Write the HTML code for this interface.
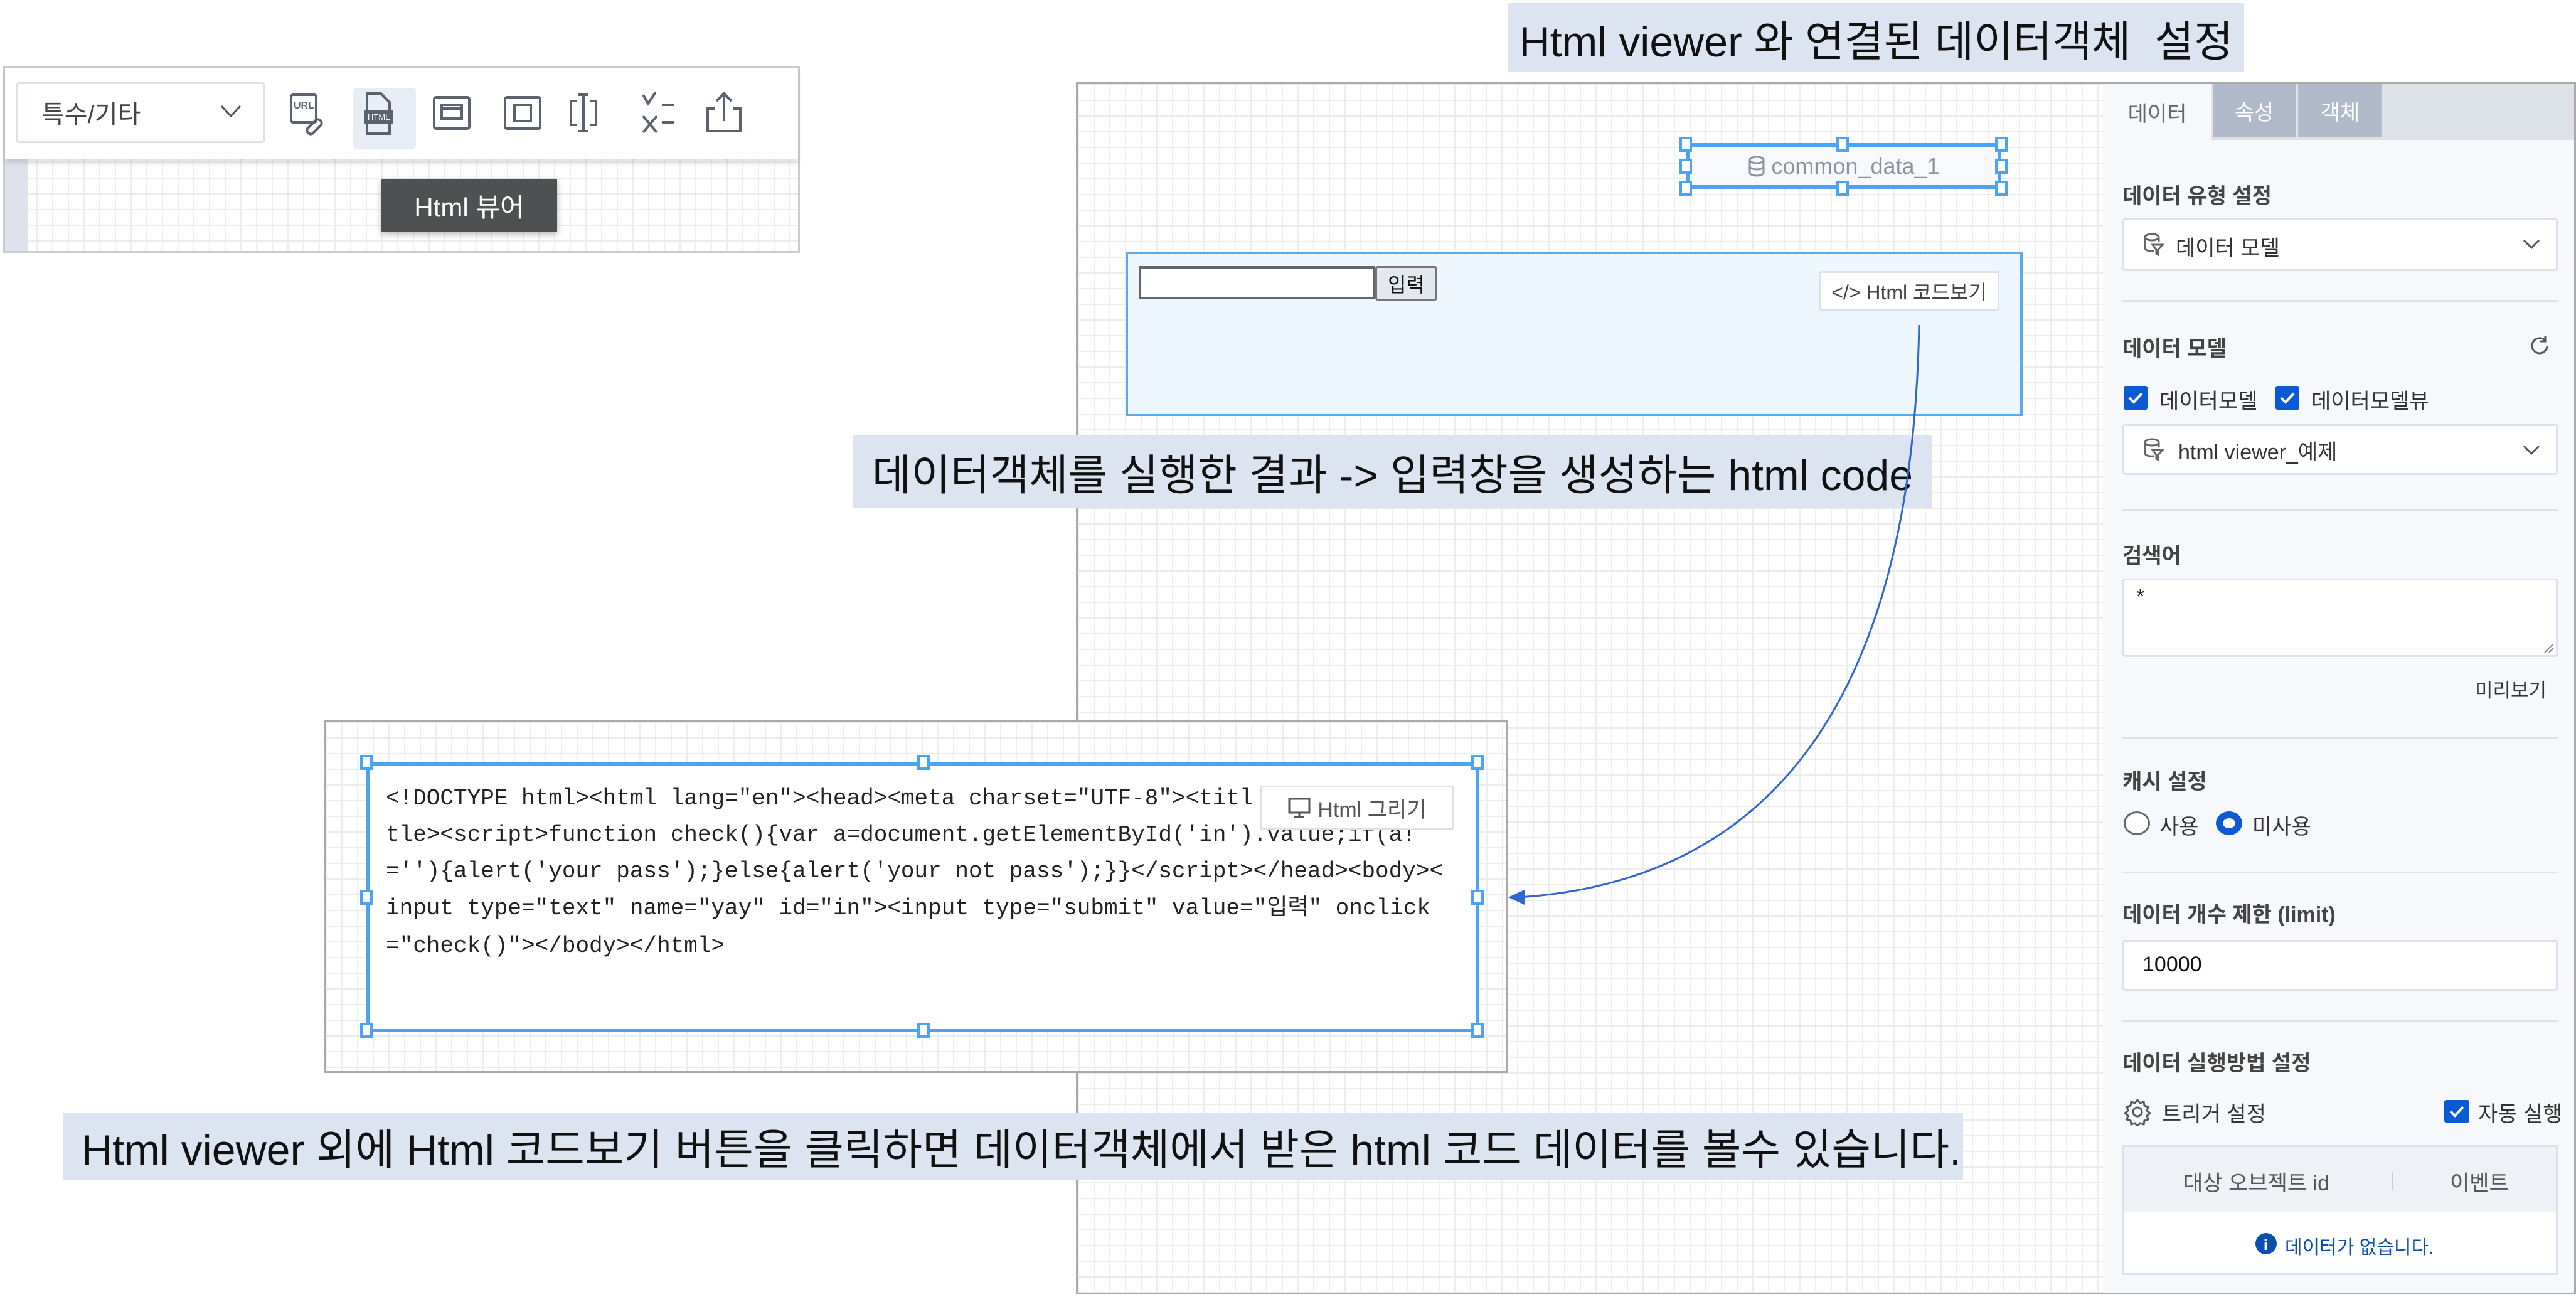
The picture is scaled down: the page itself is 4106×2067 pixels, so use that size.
<!DOCTYPE html>
<html><head><meta charset="utf-8"><style>
*{margin:0;padding:0;box-sizing:border-box}
body{width:4106px;height:2067px;background:#fff;position:relative;overflow:hidden;font-family:"Liberation Sans","Noto Sans CJK KR",sans-serif;color:#333}
.a{position:absolute}
.grid{background-color:#fff;background-image:linear-gradient(#ececec 2px,transparent 2px),linear-gradient(90deg,#eeeeee 2px,transparent 2px);background-size:25px 25px}
.lbl{position:absolute;background:#dce4f2;color:#111;font-size:68px;white-space:nowrap;display:flex;align-items:center;justify-content:center}
.h{width:20px;height:24px;background:#fff;border:4px solid #4aa3f5;position:absolute}
.ps{position:absolute;left:3383px;font-size:34px;color:#333;white-space:nowrap}
.b{font-weight:bold;color:#444}
.sel{position:absolute;left:3383px;width:694px;background:#fff;border:3px solid #dde2ea;border-radius:4px}
.div{position:absolute;left:3383px;width:694px;height:3px;background:#dde3eb}
.cb{position:absolute;width:38px;height:38px;background:#0a5bd3;border-radius:3px}
.code{position:absolute;left:615px;font-family:"Liberation Mono","Noto Sans CJK KR",monospace;font-size:36px;line-height:42px;color:#222;white-space:pre}
</style></head><body>

<!-- toolbar panel -->
<div class="a grid" style="left:5px;top:105px;width:1270px;height:298px;border:3px solid #ccc"></div>
<div class="a" style="left:8px;top:254px;width:36px;height:146px;background:#dde3ec"></div>
<div class="a" style="left:8px;top:108px;width:1264px;height:146px;background:#fff;box-shadow:0 6px 8px rgba(0,0,0,.12)"></div>
<div class="a" style="left:26px;top:131px;width:396px;height:97px;border:3px solid #dde2ea;border-radius:4px;background:#fff"></div>
<div class="a" style="left:66px;top:150px;font-size:40px;color:#444">특수/기타</div>
<svg class="a" style="left:350px;top:165px" width="36" height="24"><path d="M3 4 L18 20 L33 4" fill="none" stroke="#555" stroke-width="3"/></svg>
<div class="a" style="left:563px;top:140px;width:100px;height:98px;background:#e9eef6;border-radius:6px"></div>
<svg class="a" style="left:460px;top:145px" width="780" height="80" fill="none" stroke="#5a6270" stroke-width="4">
  <rect x="4" y="6" width="40" height="44" rx="3"/><text x="8" y="28" font-size="16" fill="#5a6270" stroke="none" font-weight="bold" font-family="Liberation Sans">URL</text>
  <path d="M30 60 l14 -14 a6 6 0 0 1 8 8 l-14 14 a6 6 0 0 1 -8 -8z"/>
  <path d="M125 4 h22 l14 14 v50 h-36z"/><rect x="122" y="32" width="42" height="18" fill="#5a6270"/><text x="126" y="46" font-size="13" fill="#fff" stroke="none" font-family="Liberation Sans">HTML</text>
  <rect x="232" y="10" width="56" height="50" rx="3"/><rect x="244" y="22" width="32" height="22"/><path d="M244 28 h32"/>
  <rect x="345" y="10" width="56" height="50" rx="3"/><rect x="360" y="22" width="26" height="26"/>
  <path d="M460 16 h-10 v38 h10 M480 16 h10 v38 h-10 M470 4 v62 M462 6 h16 M462 64 h16"/>
  <path d="M565 6 l8 14 l12 -18 M565 40 l22 26 M587 40 l-22 26 M595 22 h20 M595 50 h20"/>
  <path d="M680 28 h-12 v36 h52 v-36 h-12 M694 48 v-44 M682 16 l12 -12 l12 12"/>
</svg>
<div class="a" style="left:608px;top:285px;width:280px;height:84px;background:#4f5052;color:#fff;font-size:42px;display:flex;align-items:center;justify-content:center;box-shadow:0 4px 10px rgba(0,0,0,.3)">Html 뷰어</div>

<!-- title label -->
<div class="lbl" style="left:2404px;top:5px;width:1173px;height:110px">Html viewer 와 연결된 데이터객체&nbsp; 설정</div>

<!-- main canvas -->
<div class="a grid" style="left:1715px;top:131px;width:2391px;height:1932px;border:3px solid #aaa"></div>

<div class="a" style="left:2687px;top:228px;width:503px;height:73px;border:6px solid #4aa3f5;background:#f7f9fc;display:flex;align-items:center;justify-content:center;color:#8a929c;font-size:36px">
<svg width="30" height="34" style="margin-right:8px"><g fill="none" stroke="#8a929c" stroke-width="3"><ellipse cx="15" cy="7" rx="11" ry="5"/><path d="M4 7 v20 a11 5 0 0 0 22 0 v-20 M4 17 a11 5 0 0 0 22 0"/></g></svg>common_data_1</div>
<div class="h" style="left:2677px;top:218px"></div><div class="h" style="left:2927px;top:218px"></div><div class="h" style="left:3180px;top:218px"></div>
<div class="h" style="left:2677px;top:253px"></div><div class="h" style="left:3180px;top:253px"></div>
<div class="h" style="left:2677px;top:288px"></div><div class="h" style="left:2927px;top:288px"></div><div class="h" style="left:3180px;top:288px"></div>

<div class="a" style="left:1794px;top:401px;width:1430px;height:262px;background:#eef6fe;border:4px solid #5aa9f5"></div>
<div class="a" style="left:1815px;top:424px;width:377px;height:53px;border:4px solid #666;background:#fff"></div>
<div class="a" style="left:2192px;top:424px;width:99px;height:55px;border:3px solid #777;border-radius:4px;background:#e4e9f0;font-size:32px;color:#111;display:flex;align-items:center;justify-content:center">입력</div>
<div class="a" style="left:2899px;top:432px;width:288px;height:63px;background:#fff;border:3px solid #dde2ea;border-radius:3px;font-size:32px;color:#444;display:flex;align-items:center;justify-content:center">&lt;/&gt;&nbsp;Html 코드보기</div>

<div class="lbl" style="left:1359px;top:694px;width:1721px;height:115px">데이터객체를 실행한 결과 -&gt; 입력창을 생성하는 html code</div>

<!-- arrow -->
<svg class="a" style="left:0;top:0" width="4106" height="2067"><path d="M3059 518 C3050 1000 2900 1400 2420 1430" fill="none" stroke="#2f66cf" stroke-width="3"/><path d="M2404 1430 l26 -12 v24z" fill="#2f66cf"/></svg>

<!-- code panel -->
<div class="a grid" style="left:516px;top:1147px;width:1888px;height:563px;border:3px solid #aaa"></div>
<div class="a" style="left:584px;top:1215px;width:1773px;height:430px;background:#fff;border:5px solid #4aa3f5"></div>
<div class="h" style="left:574px;top:1203px"></div><div class="h" style="left:1462px;top:1203px"></div><div class="h" style="left:2345px;top:1203px"></div>
<div class="h" style="left:574px;top:1418px"></div><div class="h" style="left:2345px;top:1418px"></div>
<div class="h" style="left:574px;top:1630px"></div><div class="h" style="left:1462px;top:1630px"></div><div class="h" style="left:2345px;top:1630px"></div>
<div class="code" style="top:1252px">&lt;!DOCTYPE html&gt;&lt;html lang="en"&gt;&lt;head&gt;&lt;meta charset="UTF-8"&gt;&lt;titl</div>
<div class="code" style="top:1310px">tle&gt;&lt;script&gt;function check(){var a=document.getElementById('in').value;if(a!</div>
<div class="code" style="top:1368px">='')&#123;alert('your pass');}else{alert('your not pass');}}&lt;/script&gt;&lt;/head&gt;&lt;body&gt;&lt;</div>
<div class="code" style="top:1427px">input type="text" name="yay" id="in"&gt;&lt;input type="submit" value="입력" onclick</div>
<div class="code" style="top:1487px">="check()"&gt;&lt;/body&gt;&lt;/html&gt;</div>
<div class="a" style="left:2008px;top:1252px;width:310px;height:70px;background:#fff;border:3px solid #dde2ea;border-radius:3px;font-size:34px;color:#555;display:flex;align-items:center;justify-content:center"><svg width="38" height="34" style="margin-right:10px"><g fill="none" stroke="#555" stroke-width="3"><rect x="3" y="3" width="32" height="22"/><path d="M19 25 v6 M11 32 h16"/></g></svg>Html 그리기</div>

<div class="lbl" style="left:100px;top:1773px;width:3029px;height:107px;justify-content:flex-start;padding-left:30px">Html viewer 외에 Html 코드보기 버튼을 클릭하면 데이터객체에서 받은 html 코드 데이터를 볼수 있습니다.</div>

<!-- right panel -->
<div class="a" style="left:3352px;top:134px;width:751px;height:1926px;background:#f6f8fb"></div>
<div class="a" style="left:3525px;top:134px;width:578px;height:89px;background:#dde1e8"></div>
<div class="a" style="left:3527px;top:134px;width:132px;height:85px;background:#b0bacb;color:#fff;font-size:34px;display:flex;align-items:center;justify-content:center">속성</div>
<div class="a" style="left:3663px;top:134px;width:134px;height:85px;background:#b0bacb;color:#fff;font-size:34px;display:flex;align-items:center;justify-content:center">객체</div>
<div class="a" style="left:3352px;top:134px;width:173px;height:89px;color:#666;font-size:34px;display:flex;align-items:center;justify-content:center">데이터</div>

<div class="ps b" style="top:285px">데이터 유형 설정</div>
<div class="sel" style="top:348px;height:84px"></div>
<svg class="a" style="left:3415px;top:370px" width="36" height="40"><g fill="none" stroke="#666" stroke-width="3"><ellipse cx="15" cy="8" rx="11" ry="5"/><path d="M4 8 v18 a11 5 0 0 0 14 4 M26 8 v8 M16 20 h16 l-7 8 v8 l-3 -2 v-6z"/></g></svg>
<div class="ps" style="left:3468px;top:368px">데이터 모델</div>
<svg class="a" style="left:4020px;top:380px" width="30" height="20"><path d="M3 3 L15 15 L27 3" fill="none" stroke="#555" stroke-width="3"/></svg>
<div class="div" style="top:478px"></div>

<div class="ps b" style="top:528px">데이터 모델</div>
<svg class="a" style="left:4030px;top:533px" width="36" height="36"><path d="M30 18 a12 12 0 1 1 -4 -9 M27 3 v8 h-8" fill="none" stroke="#555" stroke-width="3"/></svg>
<div class="cb" style="left:3385px;top:615px"></div><svg class="a" style="left:3385px;top:615px" width="38" height="38"><path d="M9 19 l7 7 l13 -14" fill="none" stroke="#fff" stroke-width="4"/></svg>
<div class="ps" style="left:3442px;top:612px">데이터모델</div>
<div class="cb" style="left:3627px;top:615px"></div><svg class="a" style="left:3627px;top:615px" width="38" height="38"><path d="M9 19 l7 7 l13 -14" fill="none" stroke="#fff" stroke-width="4"/></svg>
<div class="ps" style="left:3684px;top:612px">데이터모델뷰</div>
<div class="sel" style="top:676px;height:81px"></div>
<svg class="a" style="left:3415px;top:697px" width="36" height="40"><g fill="none" stroke="#666" stroke-width="3"><ellipse cx="15" cy="8" rx="11" ry="5"/><path d="M4 8 v18 a11 5 0 0 0 14 4 M26 8 v8 M16 20 h16 l-7 8 v8 l-3 -2 v-6z"/></g></svg>
<div class="ps" style="left:3472px;top:693px">html viewer_예제</div>
<svg class="a" style="left:4020px;top:708px" width="30" height="20"><path d="M3 3 L15 15 L27 3" fill="none" stroke="#555" stroke-width="3"/></svg>
<div class="div" style="top:811px"></div>

<div class="ps b" style="top:858px">검색어</div>
<div class="sel" style="top:922px;height:125px"></div>
<div class="ps" style="left:3405px;top:932px;color:#222">*</div>
<svg class="a" style="left:4052px;top:1022px" width="20" height="20"><path d="M18 4 L4 18 M18 11 L11 18" stroke="#888" stroke-width="2"/></svg>
<div class="ps" style="left:3945px;top:1075px;font-size:31px">미리보기</div>
<div class="div" style="top:1175px"></div>

<div class="ps b" style="top:1218px">캐시 설정</div>
<div class="a" style="left:3385px;top:1293px;width:42px;height:38px;border:3px solid #666;border-radius:50%;background:#fff"></div>
<div class="ps" style="left:3442px;top:1290px">사용</div>
<div class="a" style="left:3532px;top:1293px;width:42px;height:38px;border:11px solid #0a5bd3;border-radius:50%;background:#fff"></div>
<div class="ps" style="left:3590px;top:1290px">미사용</div>
<div class="div" style="top:1389px"></div>

<div class="ps b" style="top:1430px">데이터 개수 제한 (limit)</div>
<div class="sel" style="top:1498px;height:81px"></div>
<div class="ps" style="left:3415px;top:1518px;color:#111">10000</div>
<div class="div" style="top:1625px"></div>

<div class="ps b" style="top:1667px">데이터 실행방법 설정</div>
<svg class="a" style="left:3385px;top:1750px" width="44" height="44"><g fill="none" stroke="#555" stroke-width="3"><circle cx="22" cy="22" r="7"/><path d="M22 3 l4 5 l6 -2 l1 6 l6 2 l-2 6 l5 4 l-5 4 l2 6 l-6 2 l-1 6 l-6 -2 l-4 5 l-4 -5 l-6 2 l-1 -6 l-6 -2 l2 -6 l-5 -4 l5 -4 l-2 -6 l6 -2 l1 -6 l6 2z"/></g></svg>
<div class="ps" style="left:3446px;top:1748px">트리거 설정</div>
<div class="cb" style="left:3896px;top:1753px;width:40px;height:36px"></div><svg class="a" style="left:3896px;top:1753px" width="40" height="36"><path d="M10 18 l7 7 l13 -14" fill="none" stroke="#fff" stroke-width="4"/></svg>
<div class="ps" style="left:3950px;top:1748px">자동 실행</div>
<div class="a" style="left:3383px;top:1825px;width:694px;height:207px;border:3px solid #dde2ea;background:#fff"></div>
<div class="a" style="left:3386px;top:1828px;width:688px;height:103px;background:#eef1f5"></div>
<div class="ps" style="left:3480px;top:1858px;color:#555">대상 오브젝트 id</div>
<div class="a" style="left:3812px;top:1868px;width:2px;height:28px;background:#ccc"></div>
<div class="ps" style="left:3905px;top:1858px;color:#555">이벤트</div>
<svg class="a" style="left:3594px;top:1964px" width="36" height="36"><circle cx="18" cy="18" r="17" fill="#0a4fb0"/><text x="14" y="28" font-size="24" font-weight="bold" fill="#fff" font-family="Liberation Sans">i</text></svg>
<div class="ps" style="left:3642px;top:1963px;color:#0a4fb0;font-size:30px">데이터가 없습니다.</div>
</body></html>
